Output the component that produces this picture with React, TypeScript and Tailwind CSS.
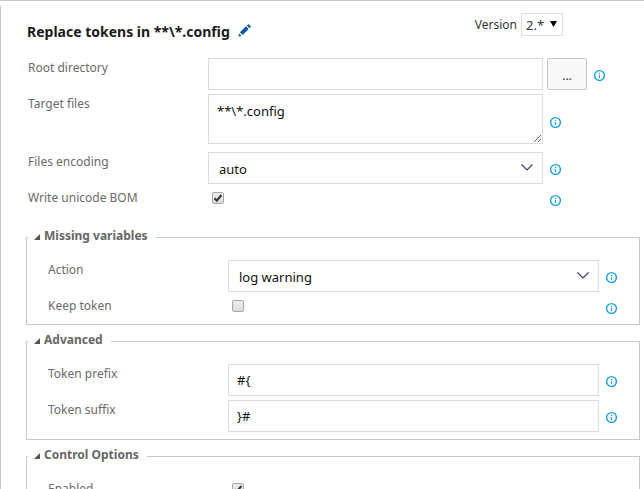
import { useId, useState } from "react";
import type { ReactNode } from "react";

function Info({ className }: { className: string }) {
  return (
    <button type="button" className={`ml-1.5 block h-3 w-3 shrink-0 ${className}`} aria-label="More information">
      <svg viewBox="0 0 12 12" className="h-3 w-3" fill="none">
        <circle cx="6.5" cy="6.5" r="4.9" stroke="#1ba1e2" strokeWidth="1.4" />
        <path d="M6.5 6V9.2M6.5 3.8V5" stroke="#1ba1e2" strokeWidth="1.2" />
      </svg>
    </button>
  );
}

function Field({ id, label, className, children }: { id: string; label: string; className: string; children: ReactNode }) {
  return (
    <div className={`flex items-start pr-[22px] ${className}`}>
      <label htmlFor={id} className="w-[180px] shrink-0 text-[12px] leading-5 text-[#6a6a6a]">
        {label}
      </label>
      {children}
    </div>
  );
}

const box = "min-w-0 flex-1 border border-[#dcdcdc] bg-white text-[13px] text-[#111111] outline-none";

function TextField({ label, value, browse = false }: { label: string; value: string; browse?: boolean }) {
  const id = useId();
  return (
    <Field id={id} label={label} className="h-9">
      <input id={id} type="text" defaultValue={value} className={`h-8 px-2 ${box}`} />
      {browse && (
        <button
          type="button"
          aria-label="Browse"
          className="ml-1 h-8 w-10 shrink-0 rounded-xs border border-[#c8c8c8] bg-[#f8f8f8] pt-1 text-[12px] text-[#333333]"
        >
          ...
        </button>
      )}
      <Info className="mt-[11px]" />
    </Field>
  );
}

function SelectField({ label, options }: { label: string; options: string[] }) {
  const id = useId();
  return (
    <Field id={id} label={label} className="h-9">
      <div className="relative flex min-w-0 flex-1">
        <select id={id} className={`h-8 appearance-none px-2.5 pt-1 ${box}`}>
          {options.map((o) => (
            <option key={o}>{o}</option>
          ))}
        </select>
        <svg viewBox="0 0 12 7" className="pointer-events-none absolute top-3 right-2.5 h-[7px] w-3" fill="none">
          <path d="M0.5 0.5L6 6L11.5 0.5" stroke="#3c3c78" strokeWidth="1.2" />
        </svg>
      </div>
      <Info className="mt-[11px]" />
    </Field>
  );
}

function CheckField({ label, checked, info = true }: { label: string; checked: boolean; info?: boolean }) {
  const id = useId();
  const [on, setOn] = useState(checked);
  return (
    <Field id={id} label={label} className="h-7">
      <div className="relative min-w-0 flex-1 pt-1 pl-1">
        <input
          id={id}
          type="checkbox"
          checked={on}
          onChange={(e) => setOn(e.target.checked)}
          className="block h-3 w-3 appearance-none rounded-xs border border-[#a6a6a6] bg-linear-to-b from-[#eeeeee] to-[#dcdcdc]"
        />
        {on && (
          <svg viewBox="0 0 12 12" className="pointer-events-none absolute top-1 left-1 h-3 w-3" fill="none">
            <path d="M2.5 6.2L4.8 8.6L9.4 3" stroke="#3a3a3a" strokeWidth="2.1" />
          </svg>
        )}
      </div>
      {info && <Info className="mt-1.5" />}
    </Field>
  );
}

function Group({ title, className = "", children }: { title: string; className?: string; children: ReactNode }) {
  return (
    <fieldset className={`mb-1.5 min-w-0 border border-[#c8c8c8] ${className}`}>
      <legend className="ml-px h-5">
        <button type="button" className="flex h-5 items-baseline pr-2 pl-1.5 text-[12px] leading-[18px] font-bold text-[#666666]">
          <svg viewBox="0 0 6 6" className="mr-1 h-1.5 w-1.5" fill="#555555">
            <path d="M6 0V6H0Z" />
          </svg>
          {title}
        </button>
      </legend>
      <div className="pt-[13px] pl-[21px]">{children}</div>
    </fieldset>
  );
}

export default function App() {
  const filesId = useId();
  const versionId = useId();
  return (
    <div className="h-screen overflow-hidden border-t border-[#c8c8c8] bg-white pt-[5px] font-['Noto_Sans',sans-serif]">
      <main className="h-full border-l border-[#c8c8c8] pr-1 pl-[25px]">
        <header className="flex h-[52px] items-start pt-[7px]">
          <h1 className="mt-2 ml-px text-[14px] leading-[22px] font-bold text-[#1a1a1a]">Replace tokens in **\*.config</h1>
          <button type="button" className="mt-[11px] ml-2" aria-label="Rename">
            <svg viewBox="0 0 13 13" className="h-[13px] w-[13px]" fill="#0b57a4">
              <path d="M0.3 12.7L1.2 9.4L3.6 11.8ZM1.9 8.3L8 2.3L10.7 5L4.7 11.1ZM8.8 1.5L9.9 0.4Q10.4 0 10.9 0.4L12.6 2.1Q13 2.6 12.6 3.1L11.5 4.2Z" />
            </svg>
          </button>
          <div className="ml-auto flex items-center pr-[77px] text-[12px] text-[#333333]">
            <label htmlFor={versionId} className="mr-1">
              Version
            </label>
            <div className="relative">
              <select
                id={versionId}
                className="block h-[23px] w-[42px] appearance-none border border-[#e0e0e0] bg-white pl-1 text-[13px] leading-5 text-[#333333]"
              >
                <option>2.*</option>
                <option>1.*</option>
              </select>
              <svg viewBox="0 0 7 6" className="pointer-events-none absolute top-2 right-1.5 h-1.5 w-[7px]" fill="#000000">
                <path d="M0 0H7L3.5 6Z" />
              </svg>
            </div>
          </div>
        </header>

        <form onSubmit={(e) => e.preventDefault()}>
          <div className="pr-[57px] pl-0.5">
            <div className="-mr-[44px]">
              <TextField label="Root directory" value="" browse />
            </div>
            <Field id={filesId} label="Target files" className="h-[58px]">
              <textarea id={filesId} defaultValue="**\*.config" className={`block h-[50px] px-2 py-1.5 leading-5 ${box}`} />
              <Info className="mt-[22px]" />
            </Field>
            <SelectField label="Files encoding" options={["auto", "ascii", "utf-7", "utf-8", "unicode"]} />
            <CheckField label="Write unicode BOM" checked />
          </div>

          <div className="mt-[11px]">
            <Group title="Missing variables">
              <SelectField label="Action" options={["log warning", "fail", "silently continue"]} />
              <CheckField label="Keep token" checked={false} />
            </Group>
            <Group title="Advanced" className="pb-[3px]">
              <TextField label="Token prefix" value="#{" />
              <TextField label="Token suffix" value="}#" />
            </Group>
            <Group title="Control Options">
              <CheckField label="Enabled" checked info={false} />
            </Group>
          </div>
        </form>
      </main>
    </div>
  );
}
